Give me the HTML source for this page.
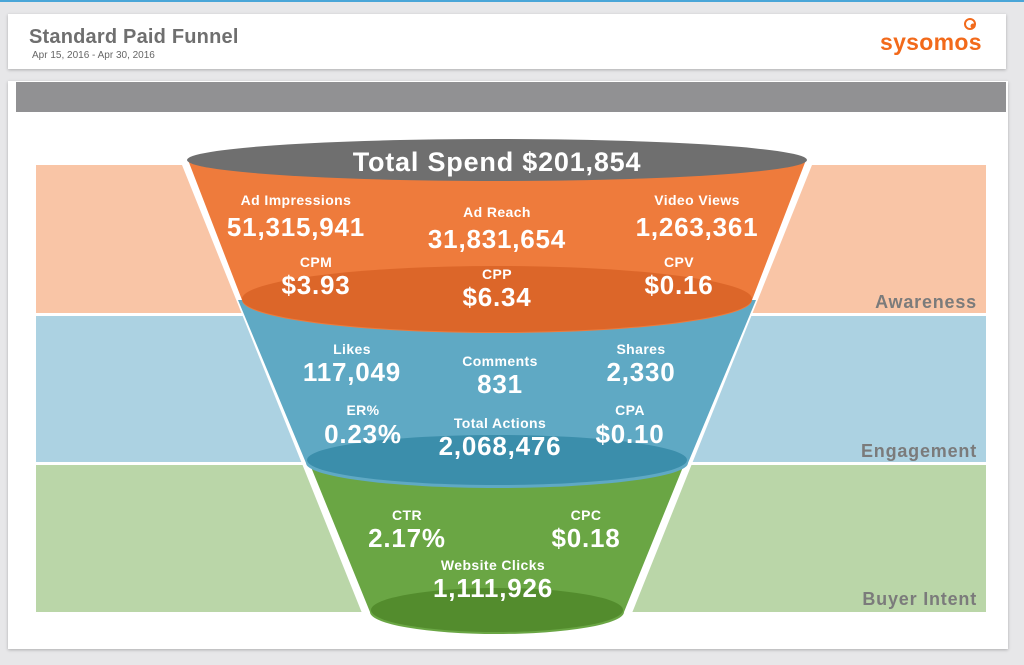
<!DOCTYPE html>
<html><head><meta charset="utf-8"><style>
body{margin:0;width:1024px;height:665px;background:#e7e7e9;font-family:"Liberation Sans",Arial,sans-serif;overflow:hidden;position:relative}
.top{position:absolute;left:0;top:0;width:1024px;height:2px;background:#4aa6d8}
.hdr{position:absolute;left:8px;top:14px;width:998px;height:55px;background:#fff;box-shadow:0 1px 3px rgba(0,0,0,.25)}
.hdr h1{position:absolute;left:21px;top:12px;margin:0;font-size:20px;font-weight:bold;color:#6f6f6f;letter-spacing:0.2px}
.hdr .d{position:absolute;left:24px;top:36px;font-size:10px;color:#666}
.card{position:absolute;left:8px;top:81px;width:1000px;height:568px;background:#fff;box-shadow:0 1px 3px rgba(0,0,0,.25)}
svg{position:absolute;left:0;top:0}
</style></head><body>
<div class="top"></div>
<div class="hdr"><h1>Standard Paid Funnel</h1><div class="d">Apr 15, 2016 - Apr 30, 2016</div></div>
<div class="card"></div>
<svg width="1024" height="665" viewBox="0 0 1024 665" font-family="Liberation Sans, Arial, sans-serif" font-weight="bold">
<rect x="16" y="82" width="990" height="30" fill="#919193"/>
<text x="880" y="50" font-size="23" fill="#f26a1b" font-weight="bold" letter-spacing="0.3">sysomos</text>
<circle cx="970" cy="24" r="5" fill="none" stroke="#f26a1b" stroke-width="2"/>
<circle cx="973" cy="26" r="2.5" fill="#f26a1b"/>
<rect x="36" y="165" width="950" height="148" fill="#f9c5a6"/>
<rect x="36" y="316" width="950" height="146" fill="#acd2e2"/>
<rect x="36" y="465" width="950" height="147" fill="#bad6a8"/>
<path d="M180,160 L364,618 A133,26 0 0 0 630,618 L814,160 Z" fill="#fff"/>
<path d="M300,440 L370,612 A127,22 0 0 0 624,612 L694,440 Z" fill="#6aa644"/>
<ellipse cx="497" cy="610" rx="126" ry="22" fill="#538c2d"/>
<path d="M238,300 L306,463 A191,25 0 0 0 688,463 L756,300 Z" fill="#5fa9c4"/>
<ellipse cx="497" cy="460" rx="190" ry="25" fill="#3b8eab"/>
<path d="M188,160 L242,300 A255,33 0 0 0 752,300 L806,160 Z" fill="#ee7b3c"/>
<ellipse cx="497" cy="299" rx="255" ry="33" fill="#dc6629"/>
<ellipse cx="497" cy="160" rx="310" ry="21" fill="#6f6f6f"/>
<g fill="#fff" text-anchor="middle">
<g font-size="14" letter-spacing="0.4">
<text x="296" y="205">Ad Impressions</text>
<text x="497" y="217">Ad Reach</text>
<text x="697" y="205">Video Views</text>
<text x="316" y="267">CPM</text>
<text x="497" y="279">CPP</text>
<text x="679" y="267">CPV</text>
<text x="352" y="354">Likes</text>
<text x="500" y="366">Comments</text>
<text x="641" y="354">Shares</text>
<text x="363" y="415">ER%</text>
<text x="500" y="428">Total Actions</text>
<text x="630" y="415">CPA</text>
<text x="407" y="520">CTR</text>
<text x="586" y="520">CPC</text>
<text x="493" y="570">Website Clicks</text>
</g>
<g font-size="26" letter-spacing="0.8">
<text x="497" y="171" font-size="27">Total Spend $201,854</text>
<text x="296" y="236">51,315,941</text>
<text x="497" y="248">31,831,654</text>
<text x="697" y="236">1,263,361</text>
<text x="316" y="294">$3.93</text>
<text x="497" y="306">$6.34</text>
<text x="679" y="294">$0.16</text>
<text x="352" y="381">117,049</text>
<text x="500" y="393">831</text>
<text x="641" y="381">2,330</text>
<text x="363" y="443">0.23%</text>
<text x="500" y="455">2,068,476</text>
<text x="630" y="443">$0.10</text>
<text x="407" y="547">2.17%</text>
<text x="586" y="547">$0.18</text>
<text x="493" y="597">1,111,926</text>
</g>
</g>
<g fill="#7b7b7b" text-anchor="end" font-size="18" letter-spacing="0.8">
<text x="977" y="308">Awareness</text>
<text x="977" y="457">Engagement</text>
<text x="977" y="605">Buyer Intent</text>
</g>
</svg>
</body></html>
